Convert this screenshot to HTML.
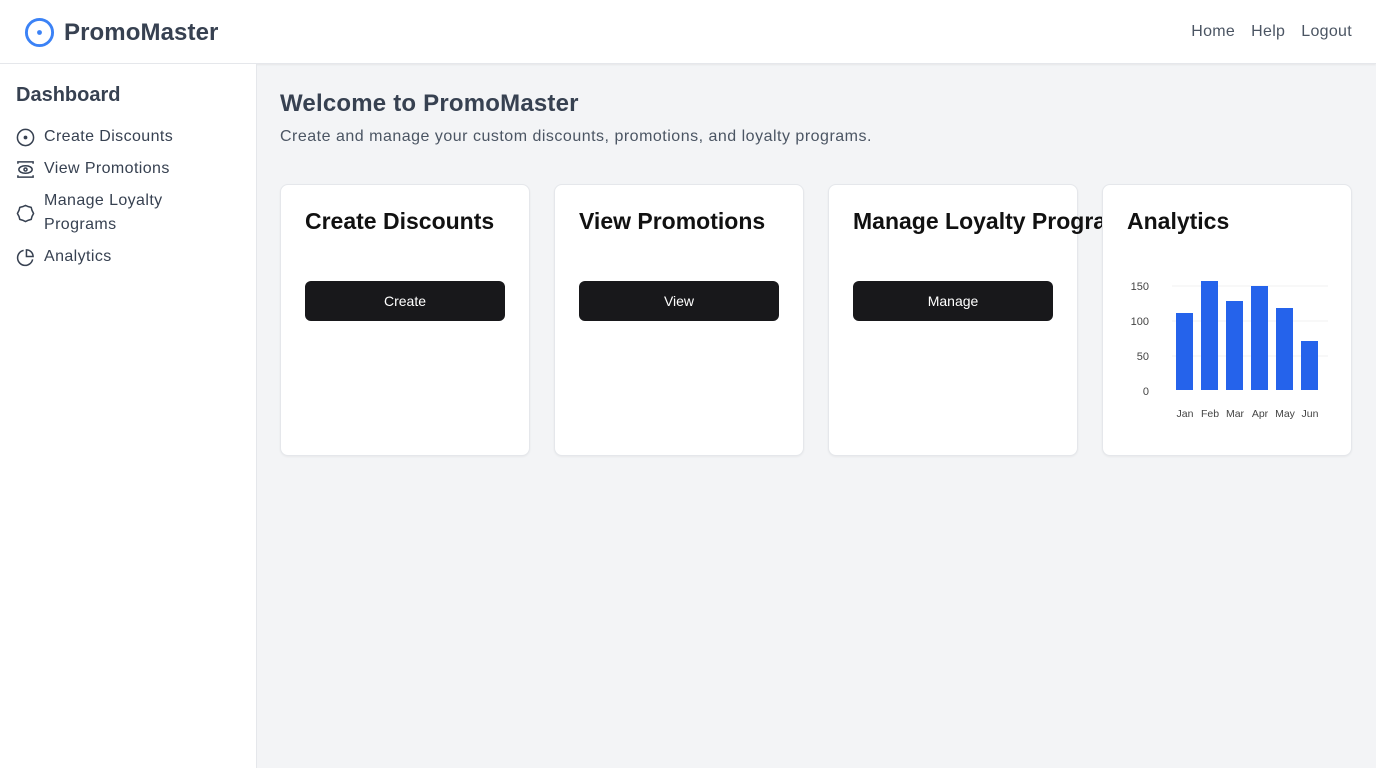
<!DOCTYPE html>
<html><head><style>
*{box-sizing:border-box;margin:0;padding:0}
body{width:1376px;height:768px;background:#f3f4f6;font-family:"Liberation Sans",sans-serif;overflow:hidden;position:relative}
header{position:absolute;left:0;top:0;width:1376px;height:64px;background:#fff;border-bottom:1px solid #e5e7eb;box-shadow:0 1px 2px rgba(0,0,0,.06)}
.logo{position:absolute;left:24px;top:17px;display:flex;align-items:center;gap:9px;font-size:24px;font-weight:bold;color:#374151;letter-spacing:.1px}
nav{position:absolute;right:24px;top:23px;font-size:16px;color:#4b5563;letter-spacing:.3px}
nav span{margin-left:16px}
aside{position:absolute;left:0;top:64px;width:257px;height:704px;background:#fff;border-right:1px solid #e5e7eb}
aside h2{position:absolute;left:16px;top:20px;font-size:20px;color:#374151}
.it{position:absolute;left:16px;display:flex;gap:9px;font-size:16px;color:#374151;line-height:24px;letter-spacing:.4px}
.it svg{flex:none;margin-top:3px}
main{position:absolute;left:280px;top:88px}
h1{font-size:24px;color:#374151;line-height:32px;letter-spacing:.2px}
.sub{margin-top:8px;font-size:16px;color:#4b5563;letter-spacing:.5px}
.card{position:absolute;top:96px;width:250px;height:272px;background:#fff;border:1px solid #e5e7eb;border-radius:8px;box-shadow:0 1px 2px rgba(0,0,0,.05);overflow:visible}
.card h3{position:absolute;left:24px;top:23px;font-size:23px;color:#111;white-space:nowrap;font-weight:bold}
.btn{position:absolute;left:24px;top:96px;width:200px;height:40px;background:#18181b;color:#fff;border-radius:6px;font-size:14px;text-align:center;line-height:40px}
</style></head><body>
<header>
<div class="logo"><svg width="31" height="31" viewBox="0 0 32 32"><circle cx="16" cy="16" r="13.5" fill="none" stroke="#3b82f6" stroke-width="3"/><circle cx="16" cy="16" r="2.5" fill="#3b82f6"/></svg>PromoMaster</div>
<nav><span>Home</span><span>Help</span><span>Logout</span></nav>
</header>
<aside>
<h2>Dashboard</h2>
<div class="it" style="top:61px"><svg width="19" height="19" viewBox="0 0 20 20"><circle cx="10" cy="10" r="8.5" fill="none" stroke="#374151" stroke-width="1.6"/><circle cx="10" cy="10" r="2" fill="#374151"/></svg>Create Discounts</div>
<div class="it" style="top:93px"><svg width="19" height="19" viewBox="0 0 20 20" fill="none" stroke="#374151" stroke-width="1.6"><path d="M2 4V2h16v2M2 16v2h16v-2"/><ellipse cx="10" cy="10" rx="7" ry="4"/><circle cx="10" cy="10" r="1.6"/></svg>View Promotions</div>
<div class="it" style="top:125px"><svg width="19" height="19" viewBox="0 0 20 20" style="margin-top:15px"><path d="M10 1.5l3 1.3 3 .8.8 3 1.7 3.4-1.7 3.2-.8 3-3 .9-3 1.4-3-1.4-3-.9-.8-3L1.5 10l1.7-3.4.8-3 3-.8z" fill="none" stroke="#374151" stroke-width="1.6" stroke-linejoin="round"/></svg>Manage Loyalty<br>Programs</div>
<div class="it" style="top:181px"><svg width="19" height="19" viewBox="0 0 20 20" fill="none" stroke="#374151" stroke-width="1.6"><path d="M17.5 12A8 8 0 1 1 8 2.5"/><path d="M11 2v7h7A7 7 0 0 0 11 2z"/></svg>Analytics</div>
</aside>
<main>
<h1>Welcome to PromoMaster</h1>
<div class="sub">Create and manage your custom discounts, promotions, and loyalty programs.</div>
</main>
<div class="card" style="left:280px;top:184px"><h3>Create Discounts</h3><div class="btn">Create</div></div>
<div class="card" style="left:554px;top:184px"><h3>View Promotions</h3><div class="btn">View</div></div>
<div class="card" style="left:828px;top:184px"><h3>Manage Loyalty Programs</h3><div class="btn">Manage</div></div>
<div class="card" style="left:1102px;top:184px;z-index:2"><h3>Analytics</h3>
<svg width="250" height="272" style="position:absolute;left:-1px;top:-1px" font-family="Liberation Sans" font-size="11" fill="#444">
<g stroke="#f0f0f0"><line x1="70" x2="226" y1="102" y2="102"/><line x1="70" x2="226" y1="137" y2="137"/><line x1="70" x2="226" y1="172" y2="172"/></g>
<g text-anchor="end"><text x="47" y="106">150</text><text x="47" y="141">100</text><text x="47" y="176">50</text><text x="47" y="211">0</text></g>
<g fill="#2563eb"><rect x="74" y="129" width="17" height="77"/><rect x="99" y="97" width="17" height="109"/><rect x="124" y="117" width="17" height="89"/><rect x="149" y="102" width="17" height="104"/><rect x="174" y="124" width="17" height="82"/><rect x="199" y="157" width="17" height="49"/></g>
<g text-anchor="middle" font-size="10.5"><text x="83" y="233">Jan</text><text x="108" y="233">Feb</text><text x="133" y="233">Mar</text><text x="158" y="233">Apr</text><text x="183" y="233">May</text><text x="208" y="233">Jun</text></g>
</svg></div>
</body></html>
